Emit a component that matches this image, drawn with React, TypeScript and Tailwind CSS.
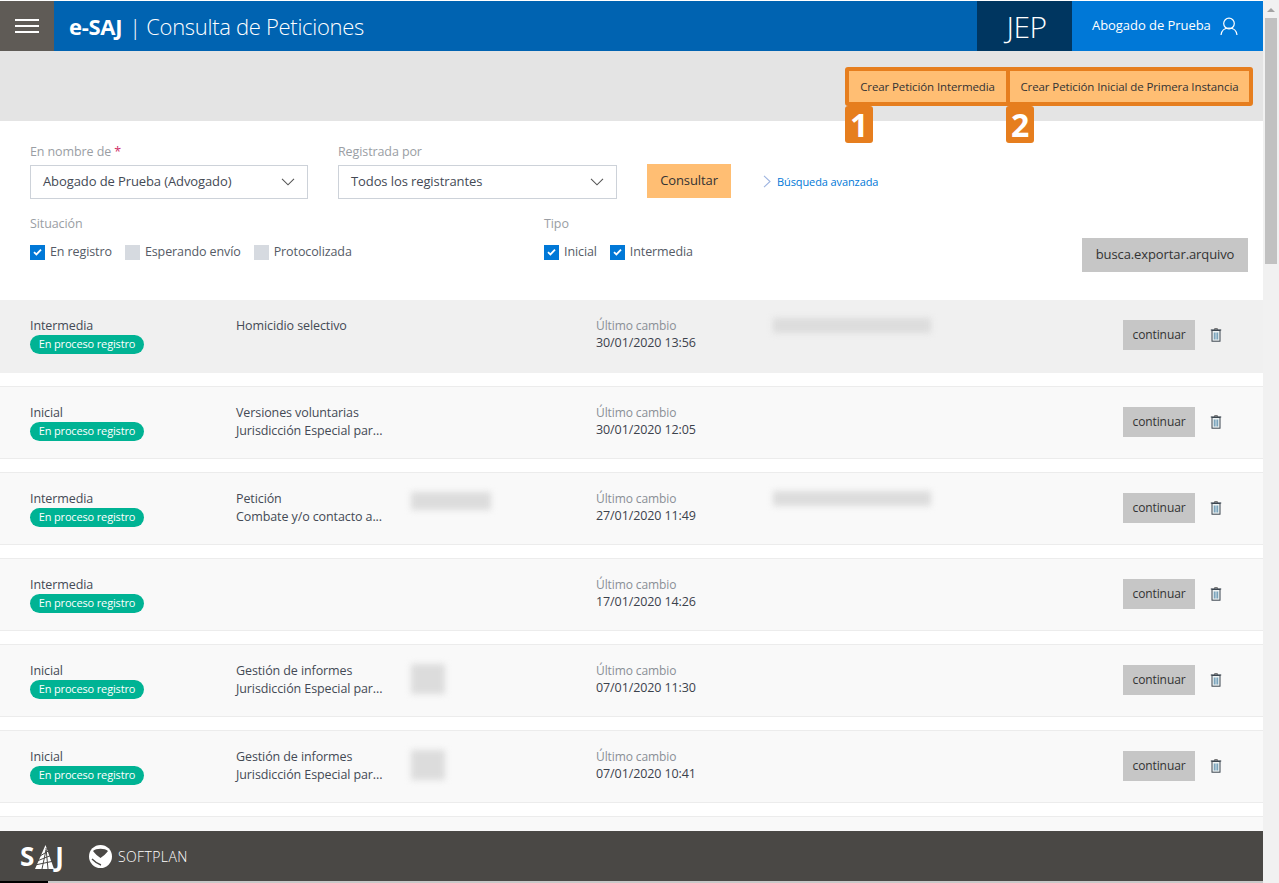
import React from "react";

const F = "font-['Open_Sans','Noto_Sans',sans-serif]";

function Check({ on, label }: { on: boolean; label: string }) {
  return (
    <div className="flex items-center gap-[5px]">
      <span className={`flex h-[15px] w-[15px] items-center justify-center ${on ? "bg-[#0078d7]" : "bg-[#d6dae0]"}`}>
        {on && (
          <svg width="9" height="8" viewBox="0 0 9 8" fill="none">
            <path d="M1 4.2 3.4 6.4 8 1.6" stroke="#fff" strokeWidth="1.8" />
          </svg>
        )}
      </span>
      <span className="text-[12.5px] leading-[16px] tracking-[-0.1px] text-[#555b66]">{label}</span>
    </div>
  );
}

function Chevron() {
  return (
    <svg width="14" height="8" viewBox="0 0 14 8" fill="none">
      <path d="M1 .8 7 6.8 13 .8" stroke="#555" strokeWidth="1.1" />
    </svg>
  );
}

function Select({ value, w }: { value: string; w: string }) {
  return (
    <div className={`flex h-[34px] items-center justify-between border border-[#cdd2d9] pl-[12px] pr-[12px] text-[13px] tracking-[-0.1px] text-[#444a55] ${w}`}>
      <span>{value}</span>
      <Chevron />
    </div>
  );
}

function Trash() {
  return (
    <svg width="12" height="14" viewBox="0 0 12 14" fill="none">
      <path d="M4.5 1.5V.8h3v.7" stroke="#444" strokeWidth="1" />
      <path d="M.8 2h10.4" stroke="#3c4650" strokeWidth="1.2" />
      <rect x="2" y="2.5" width="8" height="10.7" fill="#eef3f3" stroke="#3c4650" strokeWidth="1" />
      <path d="M4.3 4.5v7M6 4.5v7M7.7 4.5v7" stroke="#4e87a8" strokeWidth="0.9" />
    </svg>
  );
}

function Blur({ w, h, mt }: { w: string; h: string; mt: string }) {
  return <div className={`bg-[#dcdcdc] blur-[3px] ${w} ${h} ${mt}`} />;
}

type Row = {
  type: string;
  l1?: string;
  l2?: string;
  date: string;
  blurA?: "wide" | "small";
  blurB?: boolean;
  active?: boolean;
};

const rows: Row[] = [
  { type: "Intermedia", l1: "Homicidio selectivo", date: "30/01/2020 13:56", blurB: true, active: true },
  { type: "Inicial", l1: "Versiones voluntarias", l2: "Jurisdicción Especial par...", date: "30/01/2020 12:05" },
  { type: "Intermedia", l1: "Petición", l2: "Combate y/o contacto a...", date: "27/01/2020 11:49", blurA: "wide", blurB: true },
  { type: "Intermedia", date: "17/01/2020 14:26" },
  { type: "Inicial", l1: "Gestión de informes", l2: "Jurisdicción Especial par...", date: "07/01/2020 11:30", blurA: "small" },
  { type: "Inicial", l1: "Gestión de informes", l2: "Jurisdicción Especial par...", date: "07/01/2020 10:41", blurA: "small" },
];

function ListRow({ r }: { r: Row }) {
  return (
    <div
      className={`mb-[13px] flex h-[73px] shrink-0 pl-[30px] pr-[41px] pt-[17px] ${
        r.active ? "bg-[#f0f0f0]" : "border-y border-[#ececec] bg-[#f9f9f9]"
      }`}
    >
      <div className="w-[206px]">
        <div className="text-[12.5px] leading-[17px] tracking-[-0.1px] text-[#444a55]">{r.type}</div>
        <div className="mt-px flex h-[19px] w-[114px] items-center justify-center rounded-full bg-[#00b394] text-[11px] tracking-[-0.15px] text-white">
          En proceso registro
        </div>
      </div>
      <div className="w-[175px] text-[12.5px] leading-[18px] tracking-[-0.1px] text-[#444a55]">
        <div className="whitespace-nowrap">{r.l1}</div>
        <div className="whitespace-nowrap">{r.l2}</div>
      </div>
      <div className="w-[185px]">
        {r.blurA === "wide" && <Blur w="w-[80px]" h="h-[18px]" mt="mt-[2px]" />}
        {r.blurA === "small" && <Blur w="w-[34px]" h="h-[30px]" mt="mt-[2px]" />}
      </div>
      <div className="w-[177px]">
        <div className="text-[12px] leading-[17px] tracking-[-0.1px] text-[#8a8f96]">Último cambio</div>
        <div className="text-[12.5px] leading-[18px] tracking-[-0.1px] text-[#3c424c]">{r.date}</div>
      </div>
      <div className="w-[350px]">{r.blurB && <Blur w="w-[158px]" h="h-[15px]" mt="mt-[1px]" />}</div>
      <div className="-mt-[-3px] flex h-[30px] w-[72px] shrink-0 items-center justify-center bg-[#c6c6c6] text-[12px] tracking-[-0.1px] text-[#333]">
        continuar
      </div>
      <div className="ml-[15px] mt-[11px]">
        <Trash />
      </div>
    </div>
  );
}

function Badge({ n }: { n: string }) {
  return (
    <span className="absolute left-[-4px] top-full mt-[4px] flex h-[37px] w-[28px] items-center justify-center rounded-[3px] bg-[#e67e1e] text-[32px] font-bold leading-none text-white">
      {n}
    </span>
  );
}

export default function App() {
  return (
    <div className={`flex h-[883px] w-full overflow-hidden bg-white ${F}`}>
      <div className="flex w-[1263px] shrink-0 flex-col">
        <header className="mt-px flex h-[50px] shrink-0 items-stretch bg-[#0063b1] text-white">
          <div className="flex w-[54px] flex-col items-center justify-center gap-[4.5px] bg-[#5f5b56]">
            <span className="h-[1.5px] w-[24px] bg-white" />
            <span className="h-[1.5px] w-[24px] bg-white" />
            <span className="h-[1.5px] w-[24px] bg-white" />
          </div>
          <div className="flex items-center whitespace-nowrap pl-[15px] text-[22px] tracking-[-0.3px]">
            <span className="font-bold">e-SAJ</span>
            <span className="ml-[7px] font-light">| Consulta de Peticiones</span>
          </div>
          <div className="ml-auto flex w-[95px] items-center justify-center bg-[#003660] pl-[4px] text-[30px] font-light tracking-[-0.5px]">
            JEP
          </div>
          <div className="flex w-[191px] items-center bg-[#0078d7] pl-[20px] text-[13px] tracking-[-0.05px]">
            <span>Abogado de Prueba</span>
            <svg className="ml-[9px]" width="18" height="19" viewBox="0 0 18 19" fill="none">
              <circle cx="9" cy="6.5" r="5.3" stroke="#fff" strokeWidth="1.2" />
              <path d="M1 18c.5-4.2 3.4-7 8-7s7.500 2.800 8 7" stroke="#fff" strokeWidth="1.2" />
            </svg>
          </div>
        </header>

        <div className="flex h-[70px] shrink-0 items-start justify-end bg-[#e4e4e4] pr-[10px] pt-[16px]">
          <div className="flex h-[39px] rounded-[3px] border-[4px] border-[#e67e1e] bg-[#e67e1e]">
            <div className="relative mr-[4px] flex w-[157px] items-center justify-center bg-[#ffbe73] text-[11.5px] tracking-[-0.1px] text-[#333]">
              Crear Petición Intermedia
              <Badge n="1" />
            </div>
            <div className="relative flex w-[239px] items-center justify-center bg-[#ffbe73] text-[11.5px] tracking-[-0.1px] text-[#333]">
              Crear Petición Inicial de Primera Instancia
              <Badge n="2" />
            </div>
          </div>
        </div>

        <section className="h-[179px] shrink-0 pl-[30px] pr-[15px] pt-[22px]">
          <div className="flex items-end">
            <div className="w-[308px]">
              <div className="mb-[5px] text-[12.5px] leading-[17px] tracking-[-0.1px] text-[#9a9ea4]">
                En nombre de <span className="text-[#d0306a]">*</span>
              </div>
              <Select value="Abogado de Prueba (Advogado)" w="w-[278px]" />
            </div>
            <div className="w-[309px]">
              <div className="mb-[5px] text-[12.5px] leading-[17px] tracking-[-0.1px] text-[#9a9ea4]">Registrada por</div>
              <Select value="Todos los registrantes" w="w-[279px]" />
            </div>
            <button className="mb-px flex h-[34px] w-[84px] items-center justify-center bg-[#ffbe73] text-[13px] tracking-[-0.1px] text-[#333]">
              Consultar
            </button>
            <div className="mb-[9px] ml-[32px] flex items-center gap-[6px]">
              <svg width="8" height="13" viewBox="0 0 8 13" fill="none">
                <path d="M1 .8 7 6.500 1 12.200" stroke="#9db4e0" strokeWidth="1.1" />
              </svg>
              <span className="text-[11px] tracking-[-0.1px] text-[#0078d7]">Búsqueda avanzada</span>
            </div>
          </div>
          <div className="mt-[16px] flex items-start">
            <div className="w-[514px]">
              <div className="mb-[12px] text-[12.5px] leading-[17px] tracking-[-0.1px] text-[#9a9ea4]">Situación</div>
              <div className="flex gap-[13px]">
                <Check on label="En registro" />
                <Check on={false} label="Esperando envío" />
                <Check on={false} label="Protocolizada" />
              </div>
            </div>
            <div>
              <div className="mb-[12px] text-[12.5px] leading-[17px] tracking-[-0.1px] text-[#9a9ea4]">Tipo</div>
              <div className="flex gap-[13px]">
                <Check on label="Inicial" />
                <Check on label="Intermedia" />
              </div>
            </div>
            <button className="ml-auto mt-[23px] flex h-[34px] w-[166px] items-center justify-center bg-[#c6c6c6] text-[13px] tracking-[-0.1px] text-[#333]">
              busca.exportar.arquivo
            </button>
          </div>
        </section>

        <div className="min-h-0 flex-1 overflow-hidden">
          {rows.map((r, i) => (
            <ListRow key={i} r={r} />
          ))}
          <div className="h-[20px] border-t border-[#ececec] bg-[#f9f9f9]" />
        </div>

        <footer className="flex h-[50px] shrink-0 items-center bg-[#4a4845] pl-[20px] text-white">
          <div className="flex items-center text-[26px] font-bold leading-none">
            <span>S</span>
            <svg width="21" height="26" viewBox="0 0 21 26" fill="none" className="-mb-[1px]">
              <path d="M11.500 1 20 25H1Z" fill="#fff" />
              <path d="M1 21 20 17M3 17 18 11M6 12 16 6M8 25 12 6M14 25 12 4" stroke="#4a4845" strokeWidth="1" />
            </svg>
            <span>J</span>
          </div>
          <svg className="ml-[24px]" width="25" height="25" viewBox="0 0 25 25" fill="none">
            <ellipse cx="12.500" cy="12.500" rx="11.500" ry="11.500" fill="#fff" />
            <path d="M5 7c3-3 12-3 15 0-2 3-5 5-7.500 7C10 12 7 10 5 7Z" fill="#4a4845" />
            <path d="M4 15c3 3 6 5 9 6" stroke="#4a4845" strokeWidth="1.4" />
          </svg>
          <span className="ml-[5px] text-[14px] font-light tracking-[0.4px]">SOFTPLAN</span>
        </footer>
        <div className="flex h-[2px] shrink-0">
          <div className="w-[48px] bg-black" />
          <div className="flex-1 bg-[#c8c8c8]" />
        </div>
      </div>

      <div className="flex w-[16px] shrink-0 flex-col bg-[#f1f1f1]">
        <div className="flex h-[18px] shrink-0 items-center justify-center pt-[2px]">
          <span className="h-0 w-0 border-x-[4px] border-b-[4px] border-x-transparent border-b-[#a3a3a3]" />
        </div>
        <div className="mx-[2px] h-[246px] bg-[#c1c1c1]" />
      </div>
    </div>
  );
}
